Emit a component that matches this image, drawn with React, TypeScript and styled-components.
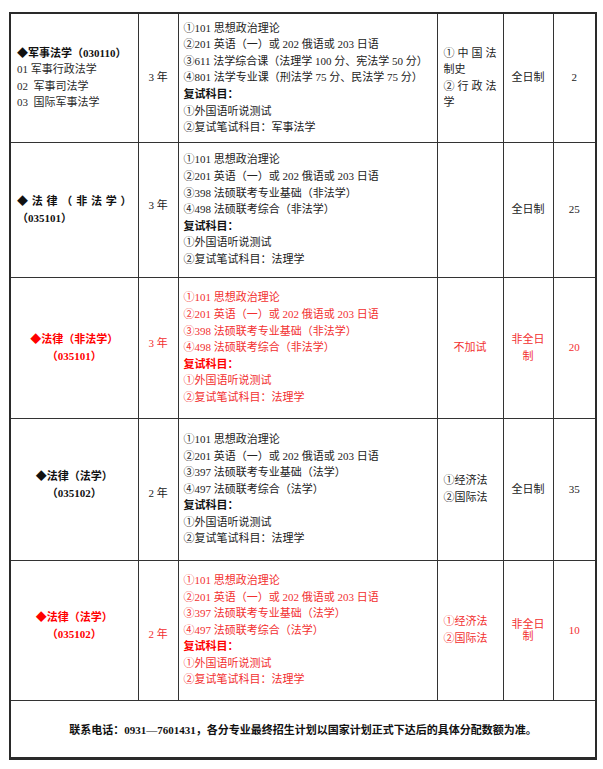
import React from "react";
import styled, { createGlobalStyle } from "styled-components";

const GlobalStyle = createGlobalStyle`
  html, body { margin: 0; padding: 0; background: #ffffff; }
  body { font-family: "Liberation Serif", "Noto Sans CJK SC", serif; }
`;

const Page = styled.div`
  padding: 12px 0 0 9px;
  width: 603px;
  box-sizing: border-box;
`;

const Table = styled.table`
  border-collapse: collapse;
  table-layout: fixed;
  width: 586px;
  border: 2px solid #2a2a2a;
  font-size: 11px;
  color: #1c1c1c;
`;

const Row = styled.tr<{ $h: number }>`
  height: ${(p) => p.$h}px;
`;

type Tone = "black" | "red";

const Cell = styled.td<{
  $align?: "left" | "center";
  $tone?: Tone;
  $shift?: number;
  $pad?: number;
  $lh?: number;
}>`
  border: 1px solid #333;
  vertical-align: middle;
  text-align: ${(p) => p.$align ?? "center"};
  color: ${(p) => (p.$tone === "red" ? "#f23030" : "#222")};
  line-height: ${(p) => p.$lh ?? 16.6}px;
  padding: ${(p) => `${Math.max(0, p.$shift ?? 0) * 2}px ${p.$pad ?? 5}px ${Math.max(0, -(p.$shift ?? 0)) * 2}px`};
  box-sizing: border-box;
  word-break: break-all;
`;

const MajorTitle = styled.div<{ $tone?: Tone; $spread?: boolean }>`
  font-weight: 700;
  color: ${(p) => (p.$tone === "red" ? "#ff0000" : "#111")};
  ${(p) => (p.$spread ? "text-align: justify; text-align-last: justify;" : "")}
`;

const MajorLine = styled.div`
  color: #2a2a2a;
  white-space: pre;
`;

const Exam = styled.div`
  white-space: nowrap;
`;

const ExamHead = styled.div<{ $tone?: Tone }>`
  font-weight: 700;
  color: ${(p) => (p.$tone === "red" ? "#ff0000" : "#111")};
`;

const Justified = styled.div`
  text-align: justify;
`;

const Footer = styled.td`
  border: 1px solid #333;
  border-bottom: 3px solid #2a2a2a;
  text-align: center;
  vertical-align: middle;
  font-weight: 700;
  font-size: 11px;
  color: #111;
  padding: 0;
`;

const Bold = styled.b`
  font-weight: 700;
`;

type RowData = {
  h: number;
  tone: Tone;
  major: React.ReactNode;
  majorAlign: "left" | "center";
  majorShift: number;
  years: string;
  yearsShift: number;
  exams: string[];
  retest: string[];
  extra: React.ReactNode;
  mode: string;
  modeLh?: number;
  count: string;
};

const examsNonLaw = [
  "①101 思想政治理论",
  "②201 英语（一）或 202 俄语或 203 日语",
  "③398 法硕联考专业基础（非法学）",
  "④498 法硕联考综合（非法学）",
];
const examsLaw = [
  "①101 思想政治理论",
  "②201 英语（一）或 202 俄语或 203 日语",
  "③397 法硕联考专业基础（法学）",
  "④497 法硕联考综合（法学）",
];
const retestLaw = ["①外国语听说测试", "②复试笔试科目：法理学"];

const rows: RowData[] = [
  {
    h: 129,
    tone: "black",
    majorAlign: "left",
    majorShift: 0,
    major: (
      <>
        <MajorTitle>◆军事法学（030110）</MajorTitle>
        <MajorLine>01 军事行政法学</MajorLine>
        <MajorLine>02  军事司法学</MajorLine>
        <MajorLine>03  国际军事法学</MajorLine>
      </>
    ),
    years: "3 年",
    yearsShift: 0,
    exams: [
      "①101 思想政治理论",
      "②201 英语（一）或 202 俄语或 203 日语",
      "③611 法学综合课（法理学 100 分、宪法学 50 分）",
      "④801 法学专业课（刑法学 75 分、民法学 75 分）",
    ],
    retest: ["①外国语听说测试", "②复试笔试科目：军事法学"],
    extra: (
      <>
        <Justified>①中国法制史</Justified>
        <Justified>②行政法学</Justified>
      </>
    ),
    mode: "全日制",
    count: "2",
  },
  {
    h: 135,
    tone: "black",
    majorAlign: "left",
    majorShift: 0,
    major: (
      <>
        <MajorTitle $spread>◆ 法 律 （ 非 法 学 ）</MajorTitle>
        <MajorTitle>（035101）</MajorTitle>
      </>
    ),
    years: "3 年",
    yearsShift: -4,
    exams: examsNonLaw,
    retest: retestLaw,
    extra: null,
    mode: "全日制",
    count: "25",
  },
  {
    h: 141,
    tone: "red",
    majorAlign: "center",
    majorShift: 0,
    major: (
      <>
        <MajorTitle $tone="red">◆法律（非法学）</MajorTitle>
        <MajorTitle $tone="red">（035101）</MajorTitle>
      </>
    ),
    years: "3 年",
    yearsShift: -4,
    exams: examsNonLaw,
    retest: retestLaw,
    extra: <div style={{ textAlign: "center" }}>不加试</div>,
    mode: "非全日制",
    count: "20",
  },
  {
    h: 142,
    tone: "black",
    majorAlign: "center",
    majorShift: -4,
    major: (
      <>
        <MajorTitle>◆法律（法学）</MajorTitle>
        <MajorTitle>（035102）</MajorTitle>
      </>
    ),
    years: "2 年",
    yearsShift: 4.5,
    exams: examsLaw,
    retest: retestLaw,
    extra: (
      <>
        <div>①经济法</div>
        <div>②国际法</div>
      </>
    ),
    mode: "全日制",
    count: "35",
  },
  {
    h: 140,
    tone: "red",
    majorAlign: "center",
    majorShift: -4,
    major: (
      <>
        <MajorTitle $tone="red">◆法律（法学）</MajorTitle>
        <MajorTitle $tone="red">（035102）</MajorTitle>
      </>
    ),
    years: "2 年",
    yearsShift: 4.5,
    exams: examsLaw,
    retest: retestLaw,
    extra: (
      <>
        <div>①经济法</div>
        <div>②国际法</div>
      </>
    ),
    mode: "非全日制",
    modeLh: 12.5,
    count: "10",
  },
];

export default function App() {
  return (
    <>
      <GlobalStyle />
      <Page>
        <Table>
          <colgroup>
            <col style={{ width: 128 }} />
            <col style={{ width: 40 }} />
            <col style={{ width: 259 }} />
            <col style={{ width: 66 }} />
            <col style={{ width: 50 }} />
            <col style={{ width: 43 }} />
          </colgroup>
          <tbody>
            {rows.map((r, i) => (
              <Row key={i} $h={r.h}>
                <Cell $align={r.majorAlign} $shift={r.majorShift} $pad={6}>
                  {r.major}
                </Cell>
                <Cell $tone={r.tone} $shift={r.yearsShift}>
                  {r.years}
                </Cell>
                <Cell $align="left" $tone={r.tone} $pad={5}>
                  {r.exams.map((e) => (
                    <Exam key={e}>{e}</Exam>
                  ))}
                  <ExamHead $tone={r.tone}>复试科目：</ExamHead>
                  {r.retest.map((e) => (
                    <Exam key={e}>{e}</Exam>
                  ))}
                </Cell>
                <Cell $align="left" $tone={r.tone} $pad={6}>
                  {r.extra}
                </Cell>
                <Cell $tone={r.tone} $pad={6} $lh={r.modeLh}>
                  {r.mode}
                </Cell>
                <Cell $tone={r.tone}>{r.count}</Cell>
              </Row>
            ))}
            <Row $h={58}>
              <Footer colSpan={6}>
                <Bold>联系电话：0931—7601431，各分专业最终招生计划以国家计划正式下达后的具体分配数额为准。</Bold>
              </Footer>
            </Row>
          </tbody>
        </Table>
      </Page>
    </>
  );
}
